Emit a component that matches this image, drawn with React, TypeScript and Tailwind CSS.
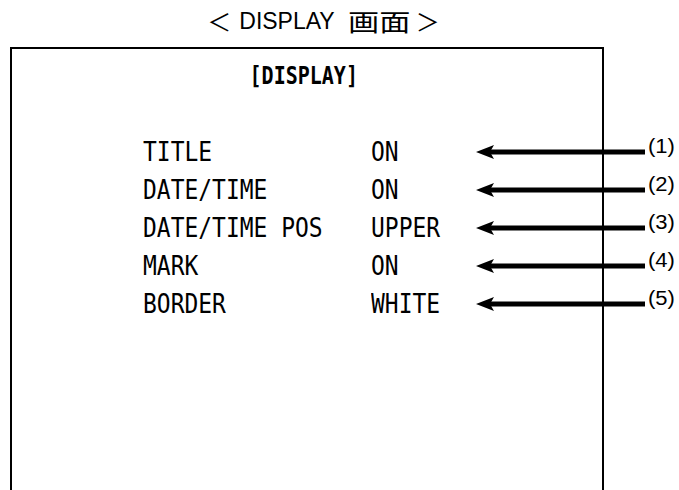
import React from "react";

const rows = [
  { label: "TITLE", value: "ON", n: "(1)" },
  { label: "DATE/TIME", value: "ON", n: "(2)" },
  { label: "DATE/TIME POS", value: "UPPER", n: "(3)" },
  { label: "MARK", value: "ON", n: "(4)" },
  { label: "BORDER", value: "WHITE", n: "(5)" },
];

const mono = "font-['DejaVu_Sans_Mono',monospace]";
const cjk = "font-['Noto_Sans_CJK_JP',sans-serif]";

const Arrow: React.FC = () => (
  <svg width="169" height="14" viewBox="0 0 169 14" className="block">
    <rect x="14" y="4.5" width="155" height="5" fill="#000" />
    <path d="M0 7 L18 0 L14 7 L18 14 Z" fill="#000" />
  </svg>
);

const App: React.FC = () => {
  return (
    <div className="w-[679px] h-[490px] bg-white overflow-hidden text-black">
      {/* ページ見出し */}
      <div className="h-[47px] flex items-center justify-center pr-[32px] pb-[5px]">
        <div className="flex items-center leading-none">
          <span className={`text-[24px] ${cjk}`}>＜</span>
          <span className="ml-[8px] text-[23px] font-['Liberation_Sans',sans-serif]">
            DISPLAY
          </span>
          <span className={`ml-[13px] inline-block origin-left scale-x-[1.3] text-[24px] ${cjk}`}>
            画面
          </span>
          <span className={`ml-[20px] text-[24px] ${cjk}`}>＞</span>
        </div>
      </div>

      {/* 画面の枠 */}
      <div className="ml-[10px] w-[594px] h-[460px] border-x-2 border-t-2 border-black">
        <div className="mt-[14px] flex justify-center pr-[6px]">
          <span className={`inline-block scale-x-[0.8] text-[25px] leading-[25px] font-bold ${mono}`}>
            [DISPLAY]
          </span>
        </div>

        <div className="mt-[45px] flex flex-col">
          {rows.map((r) => (
            <div key={r.n} className="flex items-center h-[38px] pl-[131px]">
              <div className="w-[228px] shrink-0">
                <span className={`inline-block origin-left scale-x-[0.85] whitespace-pre text-[27px] leading-[38px] ${mono}`}>
                  {r.label}
                </span>
              </div>
              <div className="w-[105px] shrink-0">
                <span className={`inline-block origin-left scale-x-[0.85] whitespace-pre text-[27px] leading-[38px] ${mono}`}>
                  {r.value}
                </span>
              </div>
              <div className="shrink-0">
                <Arrow />
              </div>
              <span className="ml-[3px] -mt-[12px] inline-block origin-left scale-x-[1.1] shrink-0 text-[20px] leading-none font-['Liberation_Sans',sans-serif]">
                {r.n}
              </span>
            </div>
          ))}
        </div>
      </div>
    </div>
  );
};

export default App;
